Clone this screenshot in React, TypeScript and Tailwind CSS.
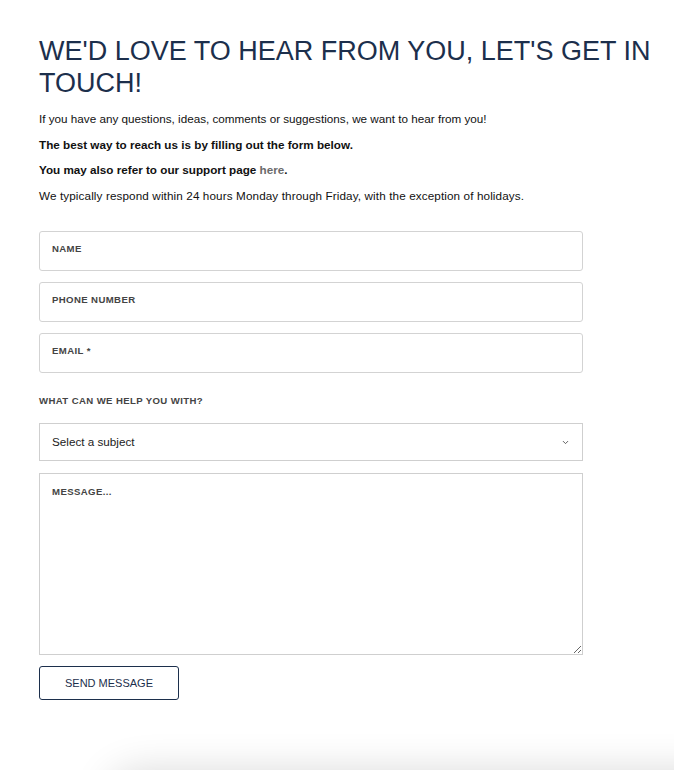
import { ChevronDown } from 'lucide-react';

const body = { fontFamily: '"Liberation Sans", Arial, sans-serif' };

export default function App() {
  return (
    <div className="h-[770px] overflow-hidden bg-white" style={body}>
      <div className="pl-[39px] pt-[35px]">
        <h1 className="w-[625px] text-[27px] leading-[32px] font-normal text-[#1c2f4c] uppercase">
          We&apos;d love to hear from you, let&apos;s get in touch!
        </h1>

        <div className="mt-[12px] flex flex-col gap-[9.5px] text-[11.7px] leading-[16px] text-[#111]">
          <p>If you have any questions, ideas, comments or suggestions, we want to hear from you!</p>
          <p className="font-bold">The best way to reach us is by filling out the form below.</p>
          <p className="font-bold">
            You may also refer to our support page <a href="#" className="text-[#6b6b6b]">here</a>.
          </p>
          <p className="tracking-[0.01em]">We typically respond within 24 hours Monday through Friday, with the exception of holidays.</p>
        </div>

        <form className="mt-[27px] w-[544px] flex flex-col" onSubmit={(e) => e.preventDefault()}>
          <div className="flex flex-col gap-[11px]">
            {['Name', 'Phone Number', 'Email *'].map((label) => (
              <input
                key={label}
                type="text"
                placeholder={label.toUpperCase()}
                className="h-[40px] w-full rounded-[3px] border border-[#d3d3d3] px-[12px] pb-[5px] text-[9.6px] font-bold tracking-[0.04em] text-[#333] placeholder:text-[#444] outline-none"
              />
            ))}
          </div>

          <label className="mt-[22px] text-[9.6px] leading-[12px] font-bold tracking-[0.04em] text-[#444]">
            WHAT CAN WE HELP YOU WITH?
          </label>

          <div className="relative mt-[16px]">
            <select
              defaultValue=""
              className="h-[38px] w-full appearance-none border border-[#cfcfcf] bg-white px-[12px] text-[11.7px] text-[#222] outline-none"
            >
              <option value="">Select a subject</option>
              <option>General question</option>
              <option>Support</option>
            </select>
            <ChevronDown className="pointer-events-none absolute right-[13px] top-[15px] h-[9px] w-[9px] text-[#555]" strokeWidth={2.5} />
          </div>

          <textarea
            placeholder="MESSAGE..."
            className="mt-[12px] h-[182px] w-full border border-[#cfcfcf] px-[12px] pt-[12px] text-[9.6px] leading-[12px] font-bold tracking-[0.04em] text-[#333] placeholder:text-[#444] outline-none"
          />

          <button
            type="submit"
            className="mt-[11px] h-[34px] w-[140px] rounded-[3px] border border-[#1c2f4c] pt-[2px] text-[11px] text-[#1c2f4c] uppercase"
          >
            Send Message
          </button>
        </form>

        <div className="ml-[70px] mt-[78px] h-[80px] w-[700px] rounded-[30px] bg-white shadow-[0_-6px_40px_rgba(0,0,0,0.16)]" />
      </div>
    </div>
  );
}
